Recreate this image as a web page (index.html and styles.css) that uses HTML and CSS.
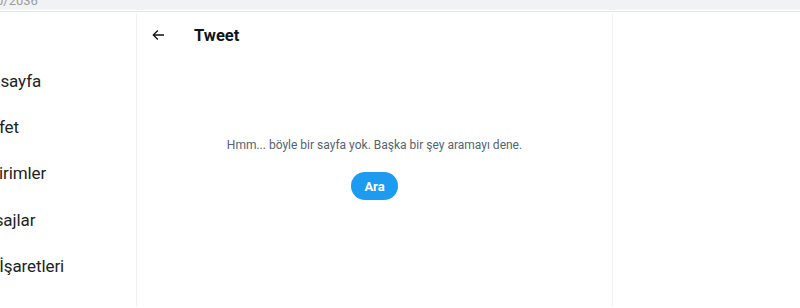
FILE: index.html
```html
<!DOCTYPE html>
<html lang="tr">

<head>
    <meta charset="UTF-8">
    <meta name="viewport" content="width=device-width, initial-scale=1.0">
    <title>Tweet</title>
    <link rel="stylesheet" href="styles.css">
</head>

<body>
    <div class="topbar">
        <span class="url">0/2036</span>
    </div>

    <div class="layout">
        <nav class="sidebar">
            <a class="nav-item" href="#">Anasayfa</a>
            <a class="nav-item" href="#">Keşfet</a>
            <a class="nav-item" href="#">Bildirimler</a>
            <a class="nav-item" href="#">Mesajlar</a>
            <a class="nav-item" href="#">Yer İşaretleri</a>
        </nav>

        <main class="primary">
            <header class="page-head">
                <button class="back" aria-label="Geri">
                    <svg viewBox="0 0 24 24" width="16" height="16">
                        <path d="M7.414 13l5.043 5.04-1.414 1.42L3.586 12l7.457-7.46 1.414 1.42L7.414 11H21v2H7.414z"></path>
                    </svg>
                </button>
                <h2>Tweet</h2>
            </header>

            <section class="empty">
                <p>Hmm... böyle bir sayfa yok. Başka bir şey aramayı dene.</p>
                <button class="search-btn">Ara</button>
            </section>
        </main>

        <aside class="side-right"></aside>
    </div>
</body>

</html>
```

FILE: styles.css
```css
* {
    margin: 0;
    padding: 0;
    box-sizing: border-box;
}

body {
    font-family: Roboto, 'Noto Sans', Arial, sans-serif;
    background: #ffffff;
    color: #0f1419;
    height: 100vh;
    overflow: hidden;
}

/* browser strip at the very top */
.topbar {
    height: 11px;
    background: #f1f2f3;
    border-bottom: 1px solid #ffffff;
    overflow: hidden;
}

.url {
    display: block;
    font-size: 13px;
    line-height: 13px;
    color: #9a9ca0;
    margin-top: -6px;
    margin-left: -4px;
}

.layout {
    display: flex;
    border-top: 1px solid #e3e4e5;
    height: calc(100% - 12px);
    padding-top: 2px;
}

.sidebar {
    width: 137px;
    border-right: 1px solid #eff1f3;
    display: flex;
    flex-direction: column;
    padding-top: 44px;
    overflow: hidden;
}

.nav-item {
    height: 46.2px;
    display: flex;
    align-items: center;
    margin-left: -29px;
    font-size: 17px;
    letter-spacing: -0.1px;
    color: #1f2326;
    text-decoration: none;
    white-space: nowrap;
}

.primary {
    width: 476px;
    border-right: 1px solid #eff1f3;
    display: flex;
    flex-direction: column;
}

.page-head {
    height: 42px;
    display: flex;
    align-items: center;
    padding-left: 13px;
}

.back {
    width: 16px;
    height: 16px;
    background: transparent;
    border: none;
    display: flex;
    margin-right: 28px;
}

.back svg {
    fill: #0f1419;
}

.page-head h2 {
    font-size: 16.5px;
    font-weight: 700;
}

.empty {
    display: flex;
    flex-direction: column;
    align-items: center;
    padding-top: 81px;
}

.empty p {
    font-size: 12px;
    color: #536471;
    line-height: 16px;
}

.search-btn {
    margin-top: 19px;
    height: 28px;
    padding: 0 13px;
    border: none;
    border-radius: 14px;
    background: #1d9bf0;
    color: #ffffff;
    font-family: inherit;
    font-size: 13px;
    font-weight: 700;
}

.side-right {
    flex: 1;
}
```
